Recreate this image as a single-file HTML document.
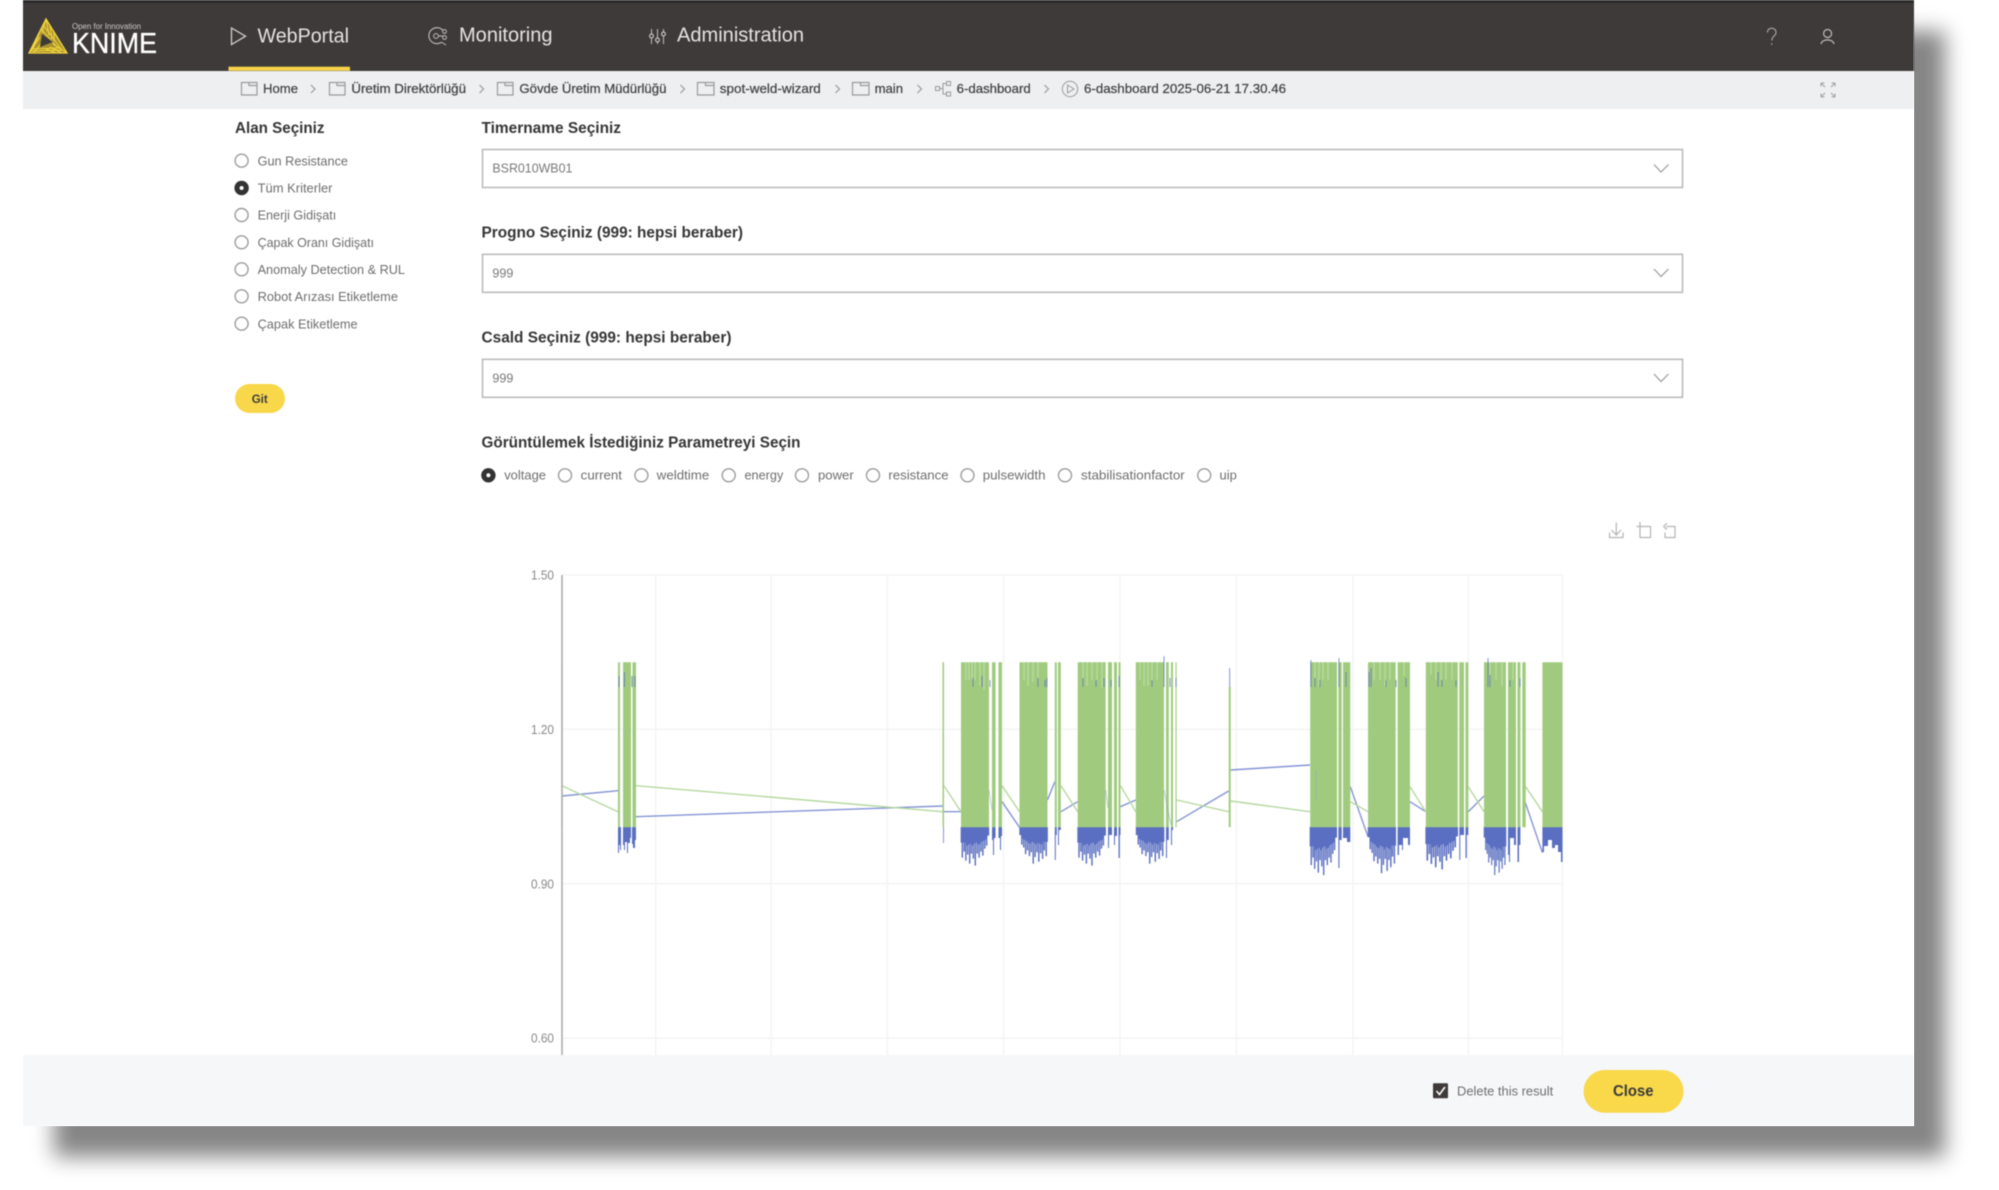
<!DOCTYPE html>
<html lang="tr">
<head>
<meta charset="utf-8">
<title>KNIME WebPortal</title>
<style>
html,body{margin:0;padding:0;background:#fff;width:1999px;height:1190px;overflow:hidden}
#shadow{position:absolute;left:23px;top:0;width:1891px;height:1126px;box-shadow:31px 31px 20px rgba(0,0,0,.48)}
svg{position:absolute;left:0;top:0;filter:blur(.45px)}
text{font-family:"Liberation Sans",sans-serif}
.nav{font-size:20px;fill:#e4e3e2}
.bc{font-size:13px;fill:#444;stroke:#444;stroke-width:.25}
.h{font-size:16px;font-weight:700;fill:#363636}
.l{font-size:13px;fill:#6e6e6e}
.s{font-size:13px;fill:#787878}
.ax{font-size:12.5px;fill:#888}
.fo{fill:none;stroke:#9a9a9a;stroke-width:1.2}
.ch{fill:none;stroke:#9a9a9a;stroke-width:1.2}
.r{fill:#fff;stroke:#9c9c9c;stroke-width:1.4}
.sel{fill:#fff;stroke:#bcbcbc;stroke-width:1.6}
.gl{stroke:#f3f3f4;stroke-width:1.3;fill:none}
.lg{stroke:#b7d8a0;stroke-width:1.4;fill:none}
.lb{stroke:#8594d4;stroke-width:1.4;fill:none}
</style>
</head>
<body>
<div id="shadow"></div>
<svg width="1999" height="1190" viewBox="0 0 1999 1190" xmlns="http://www.w3.org/2000/svg">
<defs>
<path id="j" d="M0 0V15h.8V30h.6V15h1V24h.6V15h.8V33h.6V18h1V27h.6V17h1V36h.6V16h.9V26h.6V18h1V31h.6V16h1V38h.6V15h1V26h.6V17h1V30h.6V16h1V24h.6V14h1V28h.6V13h1V21h.6V12h1V18h.6V8h1.5V0z"/>
</defs>

<!-- panel -->
<rect x="23" y="0" width="1891" height="1126" fill="#fff"/>
<rect x="23" y="0" width="1891" height="71" fill="#3e3a39"/>
<rect x="23" y="0" width="1891" height="3" fill="#2b2b2b"/>
<rect x="23" y="71" width="1891" height="38" fill="#eeeff1"/>

<!-- logo -->
<polygon points="46,19 67,53 29,53" fill="#a8922f"/>
<g fill="none" stroke="#f3d63e" stroke-width="1">
<polygon points="46,19 67,53 29,53" stroke-width="1.3"/>
<polygon points="43,25 62,50 31,51"/>
<polygon points="41,29 58,48 33,49"/>
<path d="M46 19L42 33M46 19L49 35M50 26L52 39M54 32L54 41M29 53L40 37M34 52L41 44M67 53L53 44M62 53L50 47M56 53L44 48"/>
</g>
<polygon points="42,34 53,42 40,47" fill="#3e3a39"/>
<text x="72" y="29" font-size="8" fill="#c9c8c6" textLength="69" lengthAdjust="spacingAndGlyphs">Open for Innovation</text>
<text x="72" y="53" font-size="28.500" fill="#fff" stroke="#fff" stroke-width=".35" textLength="85" lengthAdjust="spacingAndGlyphs">KNIME</text>

<!-- nav -->
<path d="M231.500 28V44.500L245.500 36.200Z" fill="none" stroke="#cfcfcf" stroke-width="1.300"/>
<text class="nav" x="257.500" y="42.700" textLength="91.500" lengthAdjust="spacingAndGlyphs">WebPortal</text>
<rect x="228.500" y="66.700" width="121.500" height="4" fill="#f8d548"/>
<path d="M443 30.500A8 8 0 1 0 441 42.500" fill="none" stroke="#bdbdbd" stroke-width="1.100"/>
<circle cx="436" cy="36" r="2.400" fill="none" stroke="#bdbdbd" stroke-width="1"/>
<circle cx="444.500" cy="31.500" r="1.900" fill="none" stroke="#bdbdbd" stroke-width="1"/>
<circle cx="444.500" cy="37.500" r="1.900" fill="none" stroke="#bdbdbd" stroke-width="1"/>
<path d="M438 36H443M441 42L446 45" stroke="#bdbdbd" stroke-width="1" fill="none"/>
<text class="nav" x="459" y="41.300" textLength="93.500" lengthAdjust="spacingAndGlyphs">Monitoring</text>
<path d="M651.500 29V44M657.500 29V44M663.500 29V44" stroke="#b5b5b5" stroke-width="1.100" fill="none"/>
<circle cx="651.500" cy="36" r="1.900" fill="#3e3a39" stroke="#cfcfcf" stroke-width="1.100"/>
<circle cx="657.500" cy="40" r="1.900" fill="#3e3a39" stroke="#cfcfcf" stroke-width="1.100"/>
<circle cx="663.500" cy="34" r="1.900" fill="#3e3a39" stroke="#cfcfcf" stroke-width="1.100"/>
<text class="nav" x="677" y="41.300" textLength="127" lengthAdjust="spacingAndGlyphs">Administration</text>
<path d="M1767.500 32.500C1767.500 26.500 1776 27 1776 32.500C1776 36 1771.800 36 1771.800 40.500" fill="none" stroke="#a8a8a8" stroke-width="1.100"/>
<circle cx="1771.800" cy="44" r=".8" fill="#a8a8a8"/>
<circle cx="1827.600" cy="33.500" r="4" fill="none" stroke="#bdbdbd" stroke-width="1.200"/>
<path d="M1821 44C1822 38.500 1833 38.500 1834 44" fill="none" stroke="#bdbdbd" stroke-width="1.200"/>

<!-- breadcrumb -->
<g class="fo">
<path d="M241.500 82.500H257V95H241.500ZM249 82.500V85.500H257"/>
<path d="M329.500 82.500H345V95H329.500ZM337 82.500V85.500H345"/>
<path d="M497.500 82.500H513V95H497.500ZM505 82.500V85.500H513"/>
<path d="M697.500 82.500H714V95H697.500ZM705.500 82.500V85.500H714"/>
<path d="M852.500 82.500H869V95H852.500ZM860.500 82.500V85.500H869"/>
</g>
<g class="ch">
<path d="M311 85L315 89L311 93"/>
<path d="M479.500 85L483.500 89L479.500 93"/>
<path d="M680.500 85L684.500 89L680.500 93"/>
<path d="M835.500 85L839.500 89L835.500 93"/>
<path d="M917.500 85L921.500 89L917.500 93"/>
<path d="M1044.500 85L1048.500 89L1044.500 93"/>
</g>
<g fill="none" stroke="#9a9a9a" stroke-width="1">
<rect x="935.500" y="86.500" width="4" height="4"/>
<rect x="946.500" y="81.500" width="4" height="4"/>
<rect x="946.500" y="92" width="4" height="4"/>
<path d="M940 88.500H943V83.500H946M943 88.500V94H946"/>
<circle cx="1070" cy="89" r="7.700"/>
<path d="M1067.500 85L1074 89L1067.500 93Z"/>
</g>
<text class="bc" x="263" y="93" textLength="35" lengthAdjust="spacingAndGlyphs">Home</text>
<text class="bc" x="351.400" y="93" textLength="114.600" lengthAdjust="spacingAndGlyphs">Üretim Direktörlüğü</text>
<text class="bc" x="519.400" y="93" textLength="147" lengthAdjust="spacingAndGlyphs">Gövde Üretim Müdürlüğü</text>
<text class="bc" x="719.800" y="93" textLength="101" lengthAdjust="spacingAndGlyphs">spot-weld-wizard</text>
<text class="bc" x="874.600" y="93" textLength="28.400" lengthAdjust="spacingAndGlyphs">main</text>
<text class="bc" x="956.700" y="93" textLength="74" lengthAdjust="spacingAndGlyphs">6-dashboard</text>
<text class="bc" x="1084" y="93" textLength="202" lengthAdjust="spacingAndGlyphs">6-dashboard 2025-06-21 17.30.46</text>
<path d="M1821 83L1825 87M1821 83H1824.500M1821 83V86.500M1835 83L1831 87M1835 83H1831.500M1835 83V86.500M1821 97L1825 93M1821 97H1824.500M1821 97V93.500M1835 97L1831 93M1835 97H1831.500M1835 97V93.500" fill="none" stroke="#a2a2a2" stroke-width="1.100"/>

<!-- left column -->
<text class="h" x="235" y="133" textLength="89.500" lengthAdjust="spacingAndGlyphs">Alan Seçiniz</text>
<circle class="r" cx="241.600" cy="160.700" r="6.500"/>
<circle cx="241.600" cy="188" r="7.200" fill="#333"/><circle cx="241.600" cy="188" r="2" fill="#fff"/>
<circle class="r" cx="241.600" cy="215" r="6.500"/>
<circle class="r" cx="241.600" cy="242.300" r="6.500"/>
<circle class="r" cx="241.600" cy="269.300" r="6.500"/>
<circle class="r" cx="241.600" cy="296.300" r="6.500"/>
<circle class="r" cx="241.600" cy="323.700" r="6.500"/>
<text class="l" x="257.600" y="165.300" textLength="90.400" lengthAdjust="spacingAndGlyphs">Gun Resistance</text>
<text class="l" x="257.600" y="192.500" textLength="74.900" lengthAdjust="spacingAndGlyphs">Tüm Kriterler</text>
<text class="l" x="257.600" y="219.600" textLength="78.700" lengthAdjust="spacingAndGlyphs">Enerji Gidişatı</text>
<text class="l" x="257.600" y="247" textLength="116.400" lengthAdjust="spacingAndGlyphs">Çapak Oranı Gidişatı</text>
<text class="l" x="257.600" y="274" textLength="147.400" lengthAdjust="spacingAndGlyphs">Anomaly Detection &amp; RUL</text>
<text class="l" x="257.600" y="301" textLength="140.400" lengthAdjust="spacingAndGlyphs">Robot Arızası Etiketleme</text>
<text class="l" x="257.600" y="328.300" textLength="100" lengthAdjust="spacingAndGlyphs">Çapak Etiketleme</text>
<rect x="235" y="384" width="50" height="29" rx="14.500" fill="#f8d74a"/>
<text x="251.700" y="403" font-size="12" font-weight="700" fill="#3c3c3c" textLength="16" lengthAdjust="spacingAndGlyphs">Git</text>

<!-- selects -->
<text class="h" x="481.500" y="133" textLength="139.500" lengthAdjust="spacingAndGlyphs">Timername Seçiniz</text>
<rect class="sel" x="482.500" y="149.500" width="1200" height="38"/>
<text class="s" x="492.400" y="172.700" textLength="80" lengthAdjust="spacingAndGlyphs">BSR010WB01</text>
<path class="ch" d="M1654 164.500L1661 172L1668.500 164.500"/>
<text class="h" x="481.500" y="237.700" textLength="261.500" lengthAdjust="spacingAndGlyphs">Progno Seçiniz (999: hepsi beraber)</text>
<rect class="sel" x="482.500" y="254.300" width="1200" height="38"/>
<text class="s" x="492.400" y="277.700" textLength="21" lengthAdjust="spacingAndGlyphs">999</text>
<path class="ch" d="M1654 269L1661 276.500L1668.500 269"/>
<text class="h" x="481.500" y="342.300" textLength="250" lengthAdjust="spacingAndGlyphs">Csald Seçiniz (999: hepsi beraber)</text>
<rect class="sel" x="482.500" y="359.300" width="1200" height="38"/>
<text class="s" x="492.400" y="382.300" textLength="21" lengthAdjust="spacingAndGlyphs">999</text>
<path class="ch" d="M1654 374L1661 381.500L1668.500 374"/>

<!-- param radios -->
<text class="h" x="481.500" y="447.300" textLength="319" lengthAdjust="spacingAndGlyphs">Görüntülemek İstediğiniz Parametreyi Seçin</text>
<circle cx="488.400" cy="475.300" r="7.200" fill="#333"/><circle cx="488.400" cy="475.300" r="2" fill="#fff"/>
<circle class="r" cx="565" cy="475.300" r="6.500"/>
<circle class="r" cx="641.400" cy="475.300" r="6.500"/>
<circle class="r" cx="728.700" cy="475.300" r="6.500"/>
<circle class="r" cx="802" cy="475.300" r="6.500"/>
<circle class="r" cx="873" cy="475.300" r="6.500"/>
<circle class="r" cx="967.500" cy="475.300" r="6.500"/>
<circle class="r" cx="1065" cy="475.300" r="6.500"/>
<circle class="r" cx="1204.200" cy="475.300" r="6.500"/>
<text class="l" x="504.200" y="479.500" textLength="41.800" lengthAdjust="spacingAndGlyphs">voltage</text>
<text class="l" x="580.700" y="479.500" textLength="41.300" lengthAdjust="spacingAndGlyphs">current</text>
<text class="l" x="656.700" y="479.500" textLength="52.600" lengthAdjust="spacingAndGlyphs">weldtime</text>
<text class="l" x="744.500" y="479.500" textLength="38.800" lengthAdjust="spacingAndGlyphs">energy</text>
<text class="l" x="818" y="479.500" textLength="35.700" lengthAdjust="spacingAndGlyphs">power</text>
<text class="l" x="888.400" y="479.500" textLength="60.200" lengthAdjust="spacingAndGlyphs">resistance</text>
<text class="l" x="982.800" y="479.500" textLength="62.700" lengthAdjust="spacingAndGlyphs">pulsewidth</text>
<text class="l" x="1081" y="479.500" textLength="103.800" lengthAdjust="spacingAndGlyphs">stabilisationfactor</text>
<text class="l" x="1219.500" y="479.500" textLength="17.300" lengthAdjust="spacingAndGlyphs">uip</text>

<!-- toolbox -->
<g fill="none" stroke="#b4b4b4" stroke-width="1.200">
<path d="M1616.300 522.500V534.500M1611.500 530L1616.300 535L1621 530M1609.500 532.500V537.500H1623V532.500"/>
<path d="M1640 523.500V537.500H1650.500V526.500H1636.500M1640 522V523.500"/>
<path d="M1666 526.500H1675V537.500H1665V532.500"/>
<path d="M1663.500 526.500L1667 523M1663.500 526.500L1667 529.500"/>
</g>

<!-- chart grid -->
<path class="gl" d="M562 575H1562.500M562 729.200H1562.500M562 883.700H1562.500M562 1038.200H1562.500M655.700 575V1055M771 575V1055M887.300 575V1055M1003.700 575V1055M1120 575V1055M1236.300 575V1055M1353 575V1055M1468.300 575V1055M1562.500 575V1055"/>
<text class="ax" x="531" y="579.300" textLength="23" lengthAdjust="spacingAndGlyphs">1.50</text>
<text class="ax" x="531" y="733.800" textLength="23" lengthAdjust="spacingAndGlyphs">1.20</text>
<text class="ax" x="531" y="888.300" textLength="23" lengthAdjust="spacingAndGlyphs">0.90</text>
<text class="ax" x="531" y="1042.600" textLength="23" lengthAdjust="spacingAndGlyphs">0.60</text>

<!-- series lines -->
<path class="lb" d="M562 796L618 790.700M636 816.700L942.500 806M944 811.700L961 811.700M1002 801.700L1019.500 827.300M1047.500 800L1054.800 781.700M1061 811.700L1077.700 801.700M1120.500 806.700L1135.800 800M1176.600 821.700L1228.700 791M1230.700 770L1310 765M1350.300 786.700L1368 836.700M1410 801.700L1425.800 811.700M1468.300 811.700L1484 796M1525 801.700L1542.400 852.700"/>
<path class="lg" d="M562 785.700L618 811.700M636 785.700L942.500 811.700M944 785.700L961 811.700M1002 785.700L1019.500 811.700M1061 785.700L1077.700 811.700M1120.500 785.700L1135.800 811.700M1176.600 800L1228.700 811.700M1230.700 801L1310 811.700M1350.300 801.700L1368 811.700M1410 786.700L1425.800 811.700M1468.300 786.700L1484 811.700M1525.700 786.700L1542.400 811.700"/>

<!-- blue below -->
<g fill="#5a6fc2">
<path d="M618 827V853H619V845H620V850H621V827zM623 827V845H624V850H625V842H627V853H628V843H630V838H631V827zM632 827V844H633V848H635V840H636V827z"/>
<g stroke="#5a6fc2" stroke-width=".6">
<use href="#j" transform="translate(961,827.300) scale(1.190,1)"/>
<use href="#j" transform="translate(1047.500,827.300) scale(-1.190,.95)"/>
<use href="#j" transform="translate(1077.700,827.300) scale(1.190,1)"/>
<use href="#j" transform="translate(1164,827.300) scale(-1.190,.95)"/>
<use href="#j" transform="translate(1310,827.300) scale(1.140,1.250)"/>
<use href="#j" transform="translate(1395.700,827.300) scale(-1.180,1.200)"/>
<use href="#j" transform="translate(1425.800,827.300) scale(1.360,1.100)"/>
<use href="#j" transform="translate(1506,827.300) scale(-.940,1.250)"/>
</g>
<path d="M992 827V840H993V855H994V838H995.500V827zM998.500 827V838H1000V850H1001V836H1002V827zM1054.800 827V860H1055.800V835H1056.800V827zM1058 827V845H1059V830H1060.800V827zM1108 827V848H1109V835H1112V827zM1114 827V845H1115V836H1117V827zM1118.500 827V858H1119.800V835H1120.500V827zM1166 827V858H1167V840H1168.800V827zM1171 827V845H1172V830H1173V827zM1338.400 827V868H1339.500V840H1341.700V827zM1343 827V838H1347V842H1350.300V827zM1397.600 827V855H1399V845H1402V850H1403V838H1408V845H1410V827zM1459.300 827V860H1460.300V835H1464V827zM1465.500 827V858H1466.800V835H1468.300V827zM1508 827V855H1509V862H1510V838H1514V845H1516V827zM1517.500 827V862H1519V845H1520.400V827zM1542.400 827V852H1544V846H1548V840H1552V848H1555V845H1558V852H1561V862H1562.500V827z"/>
<path d="M943 827H944V843H943z" fill="#8594d4"/>
</g>

<!-- green columns -->
<g fill="#a0cb7e">
<path d="M618 662.300H620V827.300H618ZM623 662.300H631V827.300H623ZM632.500 662.300H636V827.300H632.500Z"/>
<path d="M942.500 662.300H944V827.300H942.500Z"/>
<path d="M961 662.300H989V827.300H961ZM992 662.300H995.500V827.300H992ZM998.500 662.300H1002V827.300H998.500Z"/>
<path d="M1019.500 662.300H1047.500V827.300H1019.500ZM1054.800 662.300H1056.800V827.300H1054.800ZM1058 662.300H1060.800V827.300H1058Z"/>
<path d="M1077.700 662.300H1105.700V827.300H1077.700ZM1108 662.300H1112V827.300H1108ZM1114 662.300H1117V827.300H1114ZM1118.500 662.300H1120.500V827.300H1118.500Z"/>
<path d="M1135.800 662.300H1164V827.300H1135.800ZM1166 662.300H1168.800V827.300H1166ZM1171 662.300H1173V827.300H1171ZM1175.500 662.300H1176.600V827.300H1175.500Z"/>
<path d="M1228.700 687H1230.700V827.300H1228.700Z"/>
<path d="M1310.200 662.300H1337V827.300H1310.200ZM1338.400 662.300H1341.700V827.300H1338.400ZM1343 662.300H1350.300V827.300H1343Z"/>
<path d="M1368 662.300H1395.700V827.300H1368ZM1397.600 662.300H1410V827.300H1397.600Z"/>
<path d="M1425.800 662.300H1457.800V827.300H1425.800ZM1459.300 662.300H1464V827.300H1459.300ZM1465.500 662.300H1468.300V827.300H1465.500Z"/>
<path d="M1484 662.300H1506V827.300H1484ZM1508 662.300H1516V827.300H1508ZM1517.500 662.300H1520.400V827.300H1517.500ZM1522.300 662.300H1525.700V827.300H1522.300Z"/>
<path d="M1542.400 662.300H1562.500V827.300H1542.400Z"/>
</g>
<path d="M562 662.300V827.300" stroke="#c2dfae" stroke-width="1.300" fill="none"/>
<!-- white gaps at tops -->
<path d="M966 662V680M969 662V680M972 662V680M975 662V680M980 662V686M984 662V690M1024 662V680M1028 662V686M1033 662V682M1038 662V680M1083 662V680M1087 662V686M1092 662V680M1097 662V680M1102 662V688M1140 662V680M1144 662V686M1148 662V686M1152 662V680M1157 662V680M1315 662V680M1319 662V686M1323 662V680M1328 662V680M1374 662V680M1380 662V680M1385 662V686M1390 662V680M1404 662V676M1431 662V675M1436 662V680M1441 662V680M1446 662V680M1452 662V680M1490 662V680M1496 662V680M1502 662V686M1513 662V680" stroke="#fff" stroke-width=".7" fill="none" opacity=".5"/>
<!-- blue ticks over green tops -->
<path d="M619 676V687M624.500 672V687M632 676V687M635 676V687M973 678V687M982 676V687M990 680V687M1038 678V687M1045 680V687M1046.800 678V687M1083 678V687M1096 680V687M1104 678V687M1111 680V687M1119 676V687M1152 680V687M1164 656V687M1170 678V687M1176 678V687M1311 660V687M1315 678V687M1320 680V687M1339 658V687M1346 672V687M1369 672V687M1371 668V687M1386 680V687M1396 680V687M1406 678V687M1438 672V687M1442 680V687M1456 680V687M1488 658V687M1490 675V687M1510 680V687M1520 678V687M1229.700 668V687" stroke="#5a6fc2" stroke-width=".9" fill="none" opacity=".8"/>
<!-- blue lines through green -->
<path d="M989 790L992 810M1105.700 790L1108 808M1164 790L1171 825M1316 770V800" stroke="#8fa0d4" stroke-width="1" fill="none" opacity=".55"/>
<!-- axis -->
<path d="M562 575V1056" stroke="#a9a9a9" stroke-width="1.500" fill="none"/>

<!-- footer -->
<rect x="23" y="1055" width="1891" height="71" fill="#f6f7f9"/>
<rect x="1433" y="1083.300" width="15" height="15" rx="1" fill="#3e3a39"/>
<path d="M1436.500 1091L1439.500 1094.500L1445 1087" fill="none" stroke="#fff" stroke-width="1.600"/>
<text class="l" x="1457" y="1095.700" textLength="96.200" lengthAdjust="spacingAndGlyphs">Delete this result</text>
<rect x="1583.500" y="1070" width="100" height="42.700" rx="21.300" fill="#f9d84a"/>
<text x="1613" y="1096" font-size="16" font-weight="700" fill="#3a3a3a" textLength="40.500" lengthAdjust="spacingAndGlyphs">Close</text>
</svg>
</body>
</html>
